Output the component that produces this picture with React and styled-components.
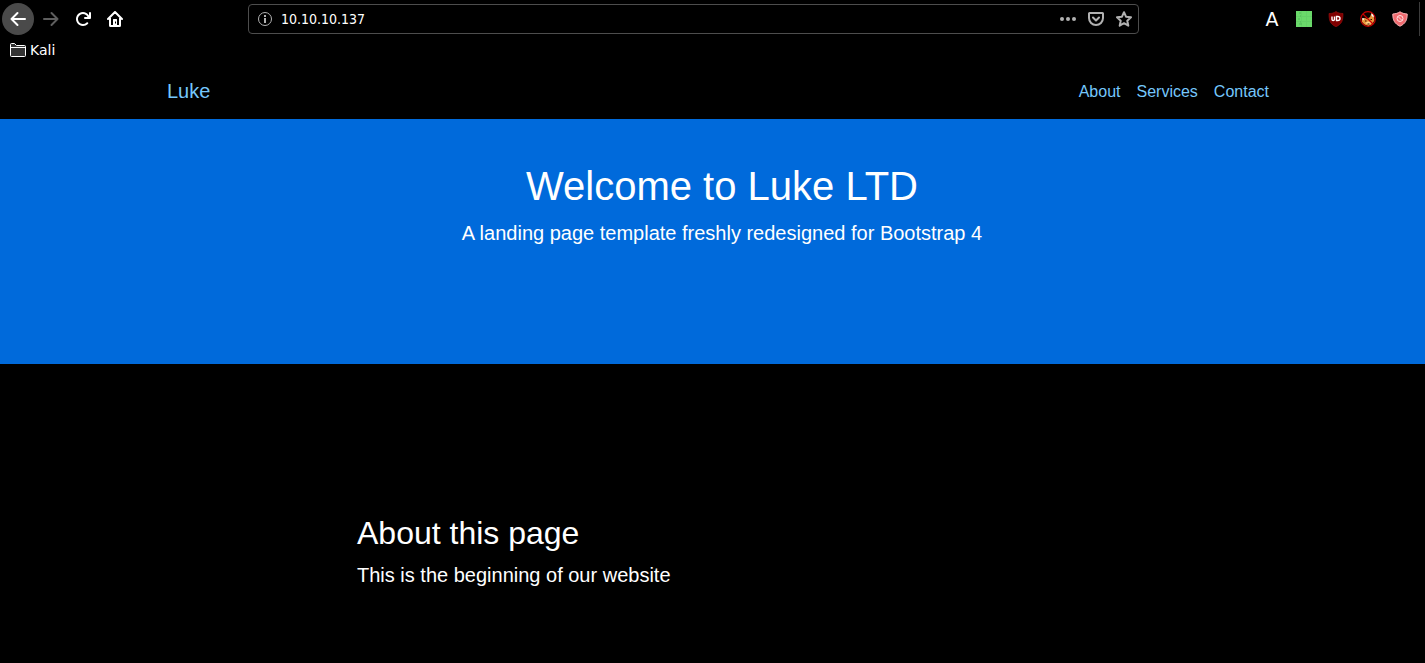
import React, { useState } from "react";
import styled, { createGlobalStyle } from "styled-components";

const GlobalStyle = createGlobalStyle`
    *, *::before, *::after {
        box-sizing: border-box;
    }

    body {
        margin: 0;
        background: #000;
        color: #fff;
        font-family: "Liberation Sans", Arial, sans-serif;
        font-size: 16px;
        line-height: 24px;
    }
`;

/* browser bar */

const Toolbar = styled.div`
    display: flex;
    align-items: center;
    height: 38px;
    padding-left: 2px;
    font-family: "DejaVu Sans", sans-serif;
`;

const ButtonGroup = styled.div`
    display: flex;
    align-items: center;
`;

const ToolButton = styled.button`
    display: flex;
    align-items: center;
    justify-content: center;
    width: 32px;
    height: 32px;
    padding: 0;
    border: 0;
    border-radius: ${({ $round }) => ($round ? '50%' : '2px')};
    background: ${({ $round }) => ($round ? '#4a4a4a' : 'transparent')};
    color: ${({ disabled }) => (disabled ? '#5e5e5e' : '#fff')};
    font-family: inherit;
    font-size: 19px;
    margin-right: ${({ $round }) => ($round ? '1px' : '0')};
`;

const Spacer = styled.div`
    flex: 0 1 117px;
`;

const AddressBar = styled.div`
    display: flex;
    flex: 1;
    align-items: center;
    height: 30px;
    padding: 0 6px 0 8px;
    border: 1px solid #4d4d4d;
    border-radius: 4px;
    color: #b1b1b1;
`;

const AddressInput = styled.input`
    flex: 1;
    min-width: 0;
    height: 24px;
    padding: 0 8px;
    border: 0;
    outline: 0;
    background: transparent;
    color: #fff;
    font-family: "DejaVu Sans Condensed", "DejaVu Sans", sans-serif;
    font-size: 14px;
`;

const PageActions = styled.div`
    display: flex;
    gap: 12px;
`;

const ActionButton = styled.button`
    display: flex;
    padding: 0;
    border: 0;
    background: transparent;
    color: inherit;
`;

const Separator = styled.div`
    width: 1px;
    height: 34px;
    margin: 0 5px 0 3px;
    background: #3c3c3c;
`;

const Bookmarks = styled.div`
    display: flex;
    align-items: center;
    height: 25px;
    padding: 0 10px 2px;
`;

const BookmarkFolder = styled.button`
    display: flex;
    align-items: center;
    gap: 4px;
    padding: 0;
    border: 0;
    background: transparent;
    color: #fff;
    font-family: "DejaVu Sans", sans-serif;
    font-size: 14px;
    line-height: 20px;
`;

/* web page */

const Navbar = styled.nav`
    height: 56px;
    padding: 8px 0 8px 19px;
`;

const Container = styled.div`
    max-width: 1140px;
    margin: 0 auto;
    padding: 0 15px;
`;

const NavRow = styled(Container)`
    display: flex;
    align-items: center;
    justify-content: space-between;
    height: 40px;
`;

const Brand = styled.a`
    color: #75c7fc;
    font-size: 20px;
    line-height: 30px;
    text-decoration: none;
`;

const NavList = styled.ul`
    display: flex;
    margin: 0;
    padding: 0;
    list-style: none;
`;

const NavLink = styled.a`
    display: block;
    padding: 9px 8px 7px;
    color: #75c7fc;
    text-decoration: none;
`;

const Hero = styled.header`
    padding: 43px 0 100px 19px;
    background: #006adb;
    text-align: center;
`;

const HeroTitle = styled.h1`
    margin: 0 0 8px;
    font-size: 40px;
    font-weight: 400;
    line-height: 48px;
`;

const Section = styled.section`
    padding: 150px 0 50px 19px;
`;

const Column = styled.div`
    max-width: 760px;
    margin: 0 auto;
    padding: 0 15px;
`;

const SectionTitle = styled.h2`
    margin: 0 0 8px;
    font-size: 32px;
    font-weight: 400;
    line-height: 38px;
`;

const Lead = styled.p`
    margin: 0 0 16px;
    font-size: 20px;
    line-height: 30px;
`;

const Icon = ({ children }) => (
    <svg width="16" height="16" viewBox="0 0 16 16" fill="none" aria-hidden="true">
        {children}
    </svg>
);

const BackIcon = () => (
    <Icon>
        <path d="M15 8H1.5M7.5 2L1.5 8l6 6" stroke="currentColor" strokeWidth="2" strokeLinecap="round" strokeLinejoin="round" />
    </Icon>
);

const ForwardIcon = () => (
    <Icon>
        <path d="M1 8h13.5M8.5 2l6 6-6 6" stroke="currentColor" strokeWidth="2" strokeLinecap="round" strokeLinejoin="round" />
    </Icon>
);

const ReloadIcon = () => (
    <Icon>
        <path fill="currentColor" d="M15 1a1 1 0 0 0-1 1v2.418A6.995 6.995 0 1 0 8 15a6.954 6.954 0 0 0 4.95-2.05 1 1 0 0 0-1.414-1.414A5.019 5.019 0 1 1 12.549 6H10a1 1 0 0 0 0 2h5a1 1 0 0 0 1-1V2a1 1 0 0 0-1-1z" />
    </Icon>
);

const HomeIcon = () => (
    <Icon>
        <path d="M1 8l7-7 7 7M3 7v7.500a.5.5 0 0 0 .5.5h9a.5.5 0 0 0 .5-.5V7" stroke="currentColor" strokeWidth="2" strokeLinecap="round" strokeLinejoin="round" />
        <path fill="currentColor" fillRule="evenodd" d="M6 15V8.500a.5.5 0 0 1 .5-.5h3a.5.5 0 0 1 .5.5V15zM8 10.500h1v2H8z" />
    </Icon>
);

const InfoIcon = () => (
    <Icon>
        <circle cx="8" cy="8" r="6.5" stroke="currentColor" />
        <path fill="currentColor" d="M7 4h2v2H7zM7 7h2v5H7z" />
    </Icon>
);

const DotsIcon = () => (
    <Icon>
        <circle cx="2" cy="8" r="2" fill="currentColor" />
        <circle cx="8" cy="8" r="2" fill="currentColor" />
        <circle cx="14" cy="8" r="2" fill="currentColor" />
    </Icon>
);

const PocketIcon = () => (
    <Icon>
        <path d="M1.500 2h13a.5.5 0 0 1 .5.5V7A7 7 0 0 1 1 7V2.500a.5.5 0 0 1 .5-.5z" stroke="currentColor" strokeWidth="2" />
        <path d="M5 6.500l3 3 3-3" stroke="currentColor" strokeWidth="2" strokeLinecap="round" strokeLinejoin="round" />
    </Icon>
);

const StarIcon = () => (
    <Icon>
        <path d="M8 1.200l2 4.500 5 .6-3.700 3.400 1 5L8 12.200l-4.300 2.500 1-5L1 6.300l5-.6z" stroke="currentColor" strokeWidth="2" strokeLinejoin="round" />
    </Icon>
);

const FolderIcon = () => (
    <Icon>
        <path d="M.5 13.500v-11a1 1 0 0 1 1-1h3l2 2h8a1 1 0 0 1 1 1v9a1 1 0 0 1-1 1h-13a1 1 0 0 1-1-1z" fill="#333" stroke="#fff" />
        <path d="M.5 5.500h15" stroke="#fff" />
    </Icon>
);

const GreenIcon = () => (
    <Icon>
        <path fill="#6ad96a" d="M0 0h16v16H0z" />
        <path d="M0 5.500h16M0 10.500h16M5.500 0v16M10.500 0v16" stroke="#65d067" />
        <path d="M3 2h2M4 5h1M2 8h2M4 11h1M3 13h3" stroke="#4eb956" />
    </Icon>
);

const ShieldIcon = () => (
    <Icon>
        <path fill="#800000" stroke="#a01010" strokeWidth=".6" d="M8 .5c2 1.400 4 2 7 2 0 7-1 10.500-7 13.200C2 13 1 9.500 1 2.500c3 0 5-.6 7-2z" />
        <path d="M4 5.500v3q0 1 1.200 1t1.300-1v-3M8.500 5.500v4h1.200q2.300 0 2.300-2t-2.300-2z" stroke="#fff" strokeWidth="1.400" />
    </Icon>
);

// fox crossed out by a red ring
const FoxIcon = () => (
    <Icon>
        <circle cx="8" cy="8" r="7" fill="#0c0400" />
        <path fill="#e8943a" d="M2 8l3-1 2 1 3-2 1.500-4 2 3 1 4-2 4-4 2-4-1.500-2.500-2.500z" />
        <path fill="#fff" d="M11.500 1l2.500 3-.5 2.500-2-2zM2 7l2.500.5L3 9.500z" />
        <path fill="#ffd28a" d="M5 12l3-1.500 4 .5-3 3z" />
        <path fill="#301000" d="M5 9.500h1.500v1H5zM10.500 8H12v1h-1.500zM7.500 12.500h2v1h-2z" />
        <circle cx="8" cy="8" r="7.300" stroke="#c80000" strokeWidth="1.200" />
        <path d="M3 3l10 10" stroke="#c80000" strokeWidth="1.200" />
    </Icon>
);

const BlockIcon = () => (
    <Icon>
        <path fill="#f16b70" stroke="#f8b4b6" d="M8 .8c2 1.300 4 2 7.200 2.200 0 6-1.700 9.700-7.200 12.200C2.500 12.700.8 9 .8 3 4 2.800 6 2.100 8 .8z" />
        <circle cx="8" cy="7.500" r="3" stroke="#ffe0e0" />
        <path d="M6 5.500l4 4" stroke="#ffe0e0" />
    </Icon>
);

const extensions = [
    { name: 'Green grid', icon: <GreenIcon /> },
    { name: 'Ad blocker', icon: <ShieldIcon /> },
    { name: 'Fox', icon: <FoxIcon /> },
    { name: 'Tracker blocker', icon: <BlockIcon /> },
];

const links = ['About', 'Services', 'Contact'];

const Browser = () => {
    const [url, setUrl] = useState('10.10.10.137');

    return (
        <div>
            <Toolbar>
                <ButtonGroup>
                    <ToolButton $round aria-label="Back"><BackIcon /></ToolButton>
                    <ToolButton disabled aria-label="Forward"><ForwardIcon /></ToolButton>
                    <ToolButton aria-label="Reload"><ReloadIcon /></ToolButton>
                    <ToolButton aria-label="Home"><HomeIcon /></ToolButton>
                </ButtonGroup>
                <Spacer />
                <AddressBar>
                    <InfoIcon />
                    <AddressInput
                        type="text"
                        aria-label="Address"
                        value={url}
                        onChange={({ target: { value } }) => setUrl(value)} />
                    <PageActions>
                        <ActionButton aria-label="Page actions"><DotsIcon /></ActionButton>
                        <ActionButton aria-label="Save to Pocket"><PocketIcon /></ActionButton>
                        <ActionButton aria-label="Bookmark this page"><StarIcon /></ActionButton>
                    </PageActions>
                </AddressBar>
                <Spacer />
                <ButtonGroup>
                    <ToolButton>A</ToolButton>
                    {extensions.map(({ name, icon }) => (
                        <ToolButton key={name} aria-label={name}>{icon}</ToolButton>
                    ))}
                </ButtonGroup>
                <Separator />
            </Toolbar>
            <Bookmarks>
                <BookmarkFolder><FolderIcon />Kali</BookmarkFolder>
            </Bookmarks>
        </div>
    );
};

const LandingPage = () => {
    return (
        <div>
            <Navbar>
                <NavRow>
                    <Brand href="#">Luke</Brand>
                    <NavList>
                        {links.map(link => (
                            <li key={link}>
                                <NavLink href={`#${link.toLowerCase()}`}>{link}</NavLink>
                            </li>
                        ))}
                    </NavList>
                </NavRow>
            </Navbar>
            <Hero>
                <Container>
                    <HeroTitle>Welcome to Luke LTD</HeroTitle>
                    <Lead>A landing page template freshly redesigned for Bootstrap 4</Lead>
                </Container>
            </Hero>
            <Section id="about">
                <Column>
                    <SectionTitle>About this page</SectionTitle>
                    <Lead>This is the beginning of our website</Lead>
                </Column>
            </Section>
        </div>
    );
};

const App = () => (
    <>
        <GlobalStyle />
        <Browser />
        <LandingPage />
    </>
);

export default App;
